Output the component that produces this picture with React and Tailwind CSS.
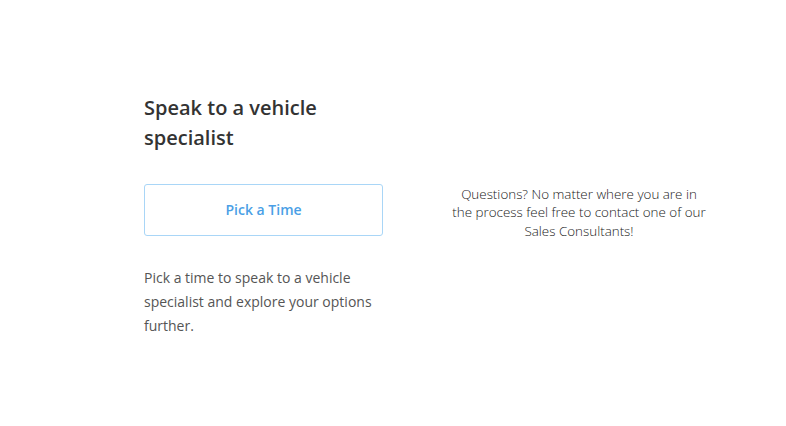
export default function App() {
  return (
    <div className="w-[786px] h-[426px] bg-white" style={{ fontFamily: '"Open Sans", sans-serif' }}>
      <div className="flex items-center pt-[93px] pl-[144px]">
        <div className="w-[240px] flex flex-col">
          <h2 className="text-[20px] leading-[30px] font-semibold text-[#333333]">
            Speak to a vehicle<br />specialist
          </h2>
          <button className="mt-[31px] w-[239px] h-[52px] border border-[#a9d6f7] rounded-[3px] bg-white text-[14px] font-semibold text-[#4a9fe6] pb-[1px]">
            Pick a Time
          </button>
          <p className="mt-[30px] text-[14px] leading-[24px] text-[#555555]">
            Pick a time to speak to a vehicle specialist and explore your options further.
          </p>
        </div>
        <div className="ml-[66px] w-[258px] -mt-[6px]">
          <p className="text-center text-[13.4px] leading-[18.5px] font-light text-[#222222]">
            Questions? No matter where you are in the process feel free to contact one of our Sales Consultants!
          </p>
        </div>
      </div>
    </div>
  );
}
